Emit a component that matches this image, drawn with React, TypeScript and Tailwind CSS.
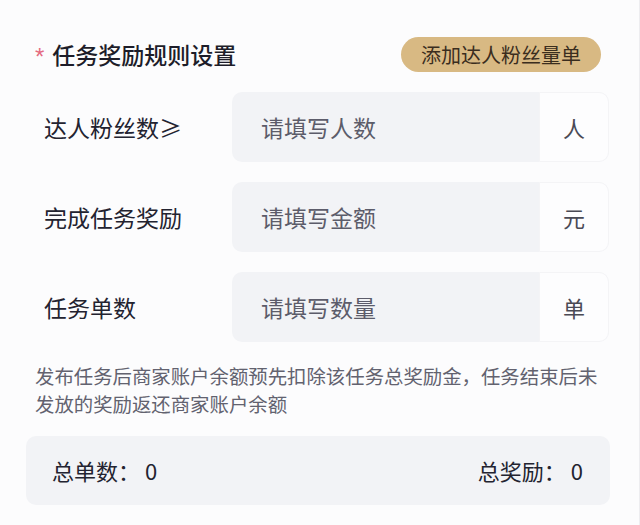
import React from "react";

const rows = [
  { label: "达人粉丝数≥", placeholder: "请填写人数", unit: "人" },
  { label: "完成任务奖励", placeholder: "请填写金额", unit: "元" },
  { label: "任务单数", placeholder: "请填写数量", unit: "单" },
];

export default function App() {
  return (
    <div
      className="w-[640px] h-[525px] bg-[#fcfcfd] border-r border-[#ededf0] overflow-hidden"
      style={{ fontFamily: '"Noto Sans CJK SC", "Noto Sans", sans-serif' }}
    >
      <div className="flex items-center justify-between pt-[37px] pl-[35px] pr-[38px]">
        <div className="flex items-center">
          <span className="text-[#e46a80] text-[24px] leading-none mr-[8px] mt-[4px] font-['Liberation_Sans']">*</span>
          <h1 className="text-[23px] font-medium text-[#1d1d29] leading-none">任务奖励规则设置</h1>
        </div>
        <button
          type="button"
          className="h-[35px] px-[20px] rounded-full bg-[#d8b983] text-[#3a2d1e] text-[20px] leading-none"
        >
          添加达人粉丝量单
        </button>
      </div>

      <div className="flex flex-col gap-[20px] mt-[20px] pl-[44px] pr-[30px]">
        {rows.map((row) => (
          <div key={row.label} className="flex items-center h-[70px]">
            <div className="w-[188px] text-[23px] text-[#232330]">{row.label}</div>
            <div className="flex flex-1 h-full rounded-[10px] overflow-hidden bg-[#f2f3f6]">
              <input
                type="text"
                placeholder={row.placeholder}
                className="flex-1 min-w-0 bg-transparent pl-[29px] text-[23px] text-[#232330] placeholder:text-[#5c5c6a] outline-none"
              />
              <div className="w-[70px] flex items-center justify-center bg-[#fdfdfe] border border-[#f4f4f6] rounded-r-[10px] text-[22px] text-[#4a4a55]">
                {row.unit}
              </div>
            </div>
          </div>
        ))}
      </div>

      <p className="mt-[20px] ml-[35px] w-[572px] text-[19.4px] leading-[28px] text-[#62626f]">
        发布任务后商家账户余额预先扣除该任务总奖励金，任务结束后未发放的奖励返还商家账户余额
      </p>

      <div className="mt-[18px] ml-[26px] w-[584px] h-[69px] rounded-[10px] bg-[#f2f3f6] flex items-center justify-between pl-[26px] pr-[27px] text-[22px] text-[#232330]">
        <span>总单数：&nbsp;0</span>
        <span>总奖励：&nbsp;0</span>
      </div>
    </div>
  );
}
